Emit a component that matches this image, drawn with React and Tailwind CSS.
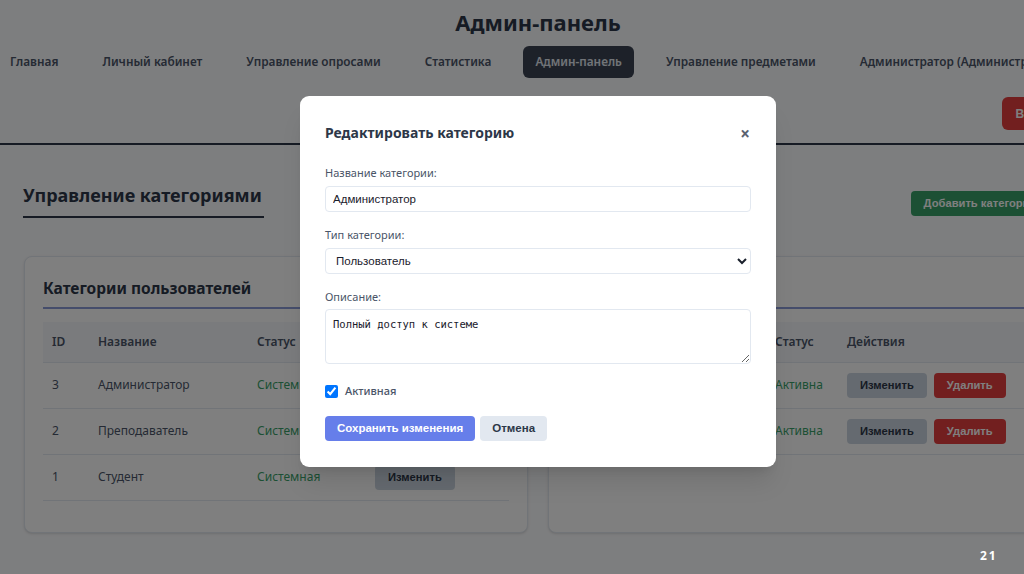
import React from "react";

const navItems = [
  "Главная",
  "Личный кабинет",
  "Управление опросами",
  "Статистика",
  "Админ-панель",
  "Управление предметами",
  "Администратор (Администратор)",
];

const userCategories = [
  { id: 3, name: "Администратор" },
  { id: 2, name: "Преподаватель" },
  { id: 1, name: "Студент" },
];

const subjectCategories = [
  { id: 2, name: "Основные" },
  { id: 1, name: "Дополнительные" },
];

const arial = { fontFamily: '"Liberation Sans", Arial, sans-serif' };

const Card = ({ title, children }) => (
  <div className="rounded-lg border border-[#e2e8f0] bg-white px-[18px] pb-[31px] pt-[18px] shadow-sm">
    <h3 className="border-b-2 border-[#8b9ad6] pb-[6px] text-[15.5px] font-bold leading-[26px] text-[#2d3748]">
      {title}
    </h3>
    <div className="mt-[13px]">{children}</div>
  </div>
);

const App = () => {
  return (
    <div
      className="relative h-[574px] w-[1024px] overflow-hidden bg-[#fbfcfe]"
      style={{ fontFamily: '"Noto Sans", "Open Sans", sans-serif' }}
    >
      <div className="relative h-[574px] w-[1076px]">
        <header className="pt-[6px]">
          <h1 className="text-center text-[22px] font-bold leading-[32px] text-[#2d3748]">
            Админ-панель
          </h1>
          <nav className="ml-[-2px] mt-[8px] flex gap-5">
            {navItems.map((item) => (
              <span
                key={item}
                className={
                  item === "Админ-панель"
                    ? "flex h-[32px] items-center whitespace-nowrap rounded-md bg-[#3a4353] px-3 text-[11.8px] font-semibold text-[#e2e8f0]"
                    : "flex h-[32px] items-center whitespace-nowrap px-3 text-[11.8px] font-semibold text-[#4a5568]"
                }
              >
                {item}
              </span>
            ))}
          </nav>
          <div className="mt-[19px] flex justify-end pr-[8px]">
            <button
              className="h-[33px] rounded-md bg-[#e53e3e] px-[13px] text-[12px] font-bold text-white"
              style={arial}
            >
              Выйти
            </button>
          </div>
          <div className="mt-[13px] h-[2px] bg-[#2d3748]" />
        </header>

        <main className="px-6">
          <div className="mt-[36px] flex items-start justify-between">
            <h2 className="ml-[-1px] border-b-2 border-[#2d3748] pb-[7px] pr-[2px] text-[18px] font-bold leading-[28px] text-[#2d3748]">
              Управление категориями
            </h2>
            <button
              className="mt-[10px] h-[25px] rounded-[4px] bg-[#38a169] px-[13px] text-[11.2px] font-bold text-white"
              style={arial}
            >
              Добавить категорию
            </button>
          </div>

          <div className="mt-[38px] grid grid-cols-2 gap-5">
            <Card title="Категории пользователей">
              <table className="w-full table-fixed border-collapse text-[12px] text-[#4a5568]">
                <colgroup>
                  <col className="w-[46px]" />
                  <col className="w-[159px]" />
                  <col className="w-[118px]" />
                  <col />
                </colgroup>
                <thead>
                  <tr className="h-[40px] border-b border-[#e2e8f0] bg-[#f5f7fa] text-left">
                    <th className="px-[9px] font-semibold">ID</th>
                    <th className="px-[9px] font-semibold">Название</th>
                    <th className="px-[9px] font-semibold">Статус</th>
                    <th className="px-[9px] font-semibold">Действия</th>
                  </tr>
                </thead>
                <tbody>
                  {userCategories.map((c) => (
                    <tr key={c.id} className="h-[46px] border-b border-[#e2e8f0]">
                      <td className="px-[9px]">{c.id}</td>
                      <td className="px-[9px]">{c.name}</td>
                      <td className="px-[9px] text-[#38a169]">Системная</td>
                      <td className="px-[9px]">
                        <button
                          className="h-[25px] rounded-[4px] bg-[#cbd5e0] px-[13px] text-[11.2px] font-bold text-[#2d3748]"
                          style={arial}
                        >
                          Изменить
                        </button>
                      </td>
                    </tr>
                  ))}
                </tbody>
              </table>
            </Card>

            <Card title="Категории предметов">
              <table className="w-full table-fixed border-collapse text-[12px] text-[#4a5568]">
                <colgroup>
                  <col className="w-[46px]" />
                  <col className="w-[153px]" />
                  <col className="w-[72px]" />
                  <col />
                </colgroup>
                <thead>
                  <tr className="h-[40px] border-b border-[#e2e8f0] bg-[#f5f7fa] text-left">
                    <th className="px-[9px] font-semibold">ID</th>
                    <th className="px-[9px] font-semibold">Название</th>
                    <th className="px-[9px] font-semibold">Статус</th>
                    <th className="px-[9px] font-semibold">Действия</th>
                  </tr>
                </thead>
                <tbody>
                  {subjectCategories.map((c) => (
                    <tr key={c.id} className="h-[46px] border-b border-[#e2e8f0]">
                      <td className="px-[9px]">{c.id}</td>
                      <td className="px-[9px]">{c.name}</td>
                      <td className="px-[9px] text-[#38a169]">Активна</td>
                      <td className="px-[9px]">
                        <div className="flex gap-[7px]" style={arial}>
                          <button className="h-[25px] rounded-[4px] bg-[#cbd5e0] px-[13px] text-[11.2px] font-bold text-[#2d3748]">
                            Изменить
                          </button>
                          <button className="h-[25px] rounded-[4px] bg-[#e53e3e] px-[13px] text-[11.2px] font-bold text-white">
                            Удалить
                          </button>
                        </div>
                      </td>
                    </tr>
                  ))}
                </tbody>
              </table>
            </Card>
          </div>
        </main>

        {/* modal */}
        <div className="absolute inset-0 flex items-start justify-center bg-black/50 pt-[96px]">
          <div className="w-[476px] rounded-[9px] bg-white px-[25px] pb-[26px] pt-[25px] shadow-xl">
            <div className="flex h-[24px] items-center justify-between">
              <h3 className="text-[14px] font-bold leading-[24px] text-[#2d3748]">
                Редактировать категорию
              </h3>
              <span className="mr-[1px] text-[17px] font-bold leading-none text-[#5a6270]">×</span>
            </div>

            <div className="mt-[20px]">
              <label className="mb-[5px] block text-[11px] leading-[16px] text-[#4a5568]">
                Название категории:
              </label>
              <input
                className="block h-[26px] w-full rounded-[4px] border border-[#e2e8f0] px-[7px] text-[11.5px] text-[#1a202c]"
                style={arial}
                defaultValue="Администратор"
              />
            </div>

            <div className="mt-[15px]">
              <label className="mb-[5px] block text-[11px] leading-[16px] text-[#4a5568]">
                Тип категории:
              </label>
              <select
                className="block h-[26px] w-full rounded-[4px] border border-[#e2e8f0] bg-white px-[6px] text-[11.5px] text-[#1a202c]"
                style={arial}
                defaultValue="user"
              >
                <option value="user">Пользователь</option>
                <option value="subject">Предмет</option>
              </select>
            </div>

            <div className="mt-[15px]">
              <label className="mb-[4px] block text-[11px] leading-[16px] text-[#4a5568]">
                Описание:
              </label>
              <textarea
                className="block h-[55px] w-full rounded-[4px] border border-[#e2e8f0] px-[7px] py-[6px] text-[10.5px] leading-[16px] text-[#1a202c]"
                style={{ fontFamily: '"DejaVu Sans Mono", monospace' }}
                defaultValue="Полный доступ к системе"
              />
            </div>

            <label className="mt-[19px] flex h-[16px] items-center gap-[7px] text-[11px] font-medium text-[#4a5568]">
              <input type="checkbox" defaultChecked className="m-0 h-[13px] w-[13px]" />
              Активная
            </label>

            <div className="mt-[17px] flex gap-[5px]" style={arial}>
              <button className="h-[25px] rounded-[4px] bg-[#667eea] px-[12px] text-[11.5px] font-bold text-white">
                Сохранить изменения
              </button>
              <button className="h-[25px] rounded-[4px] bg-[#e2e8f0] px-[12px] text-[11.5px] font-bold text-[#2d3748]">
                Отмена
              </button>
            </div>
          </div>
        </div>
      </div>

      <span className="absolute left-[980px] top-[547px] text-[12px] font-bold tracking-[2px] text-white">
        21
      </span>
    </div>
  );
};

export default App;
